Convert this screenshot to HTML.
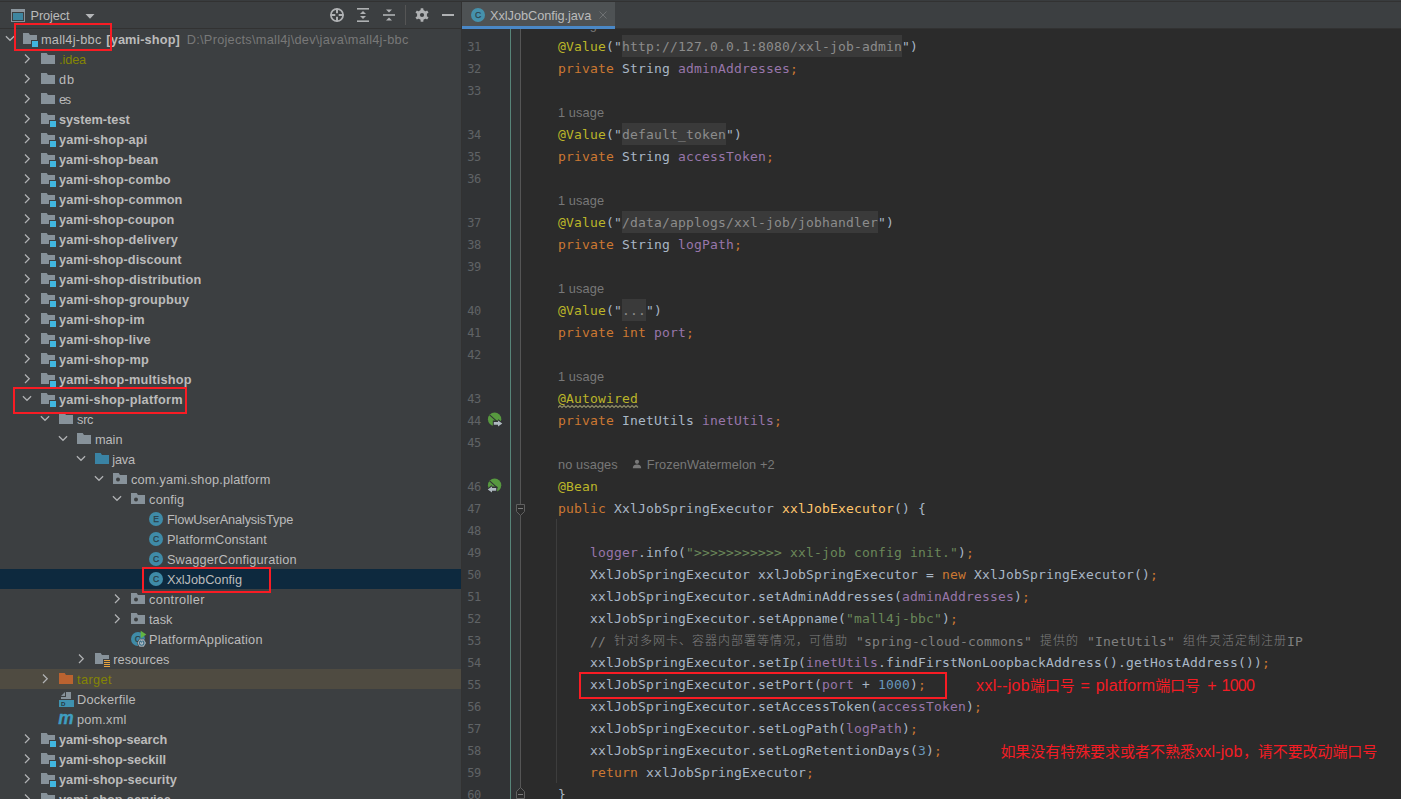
<!DOCTYPE html>
<html lang="zh"><head><meta charset="utf-8"><title>XxlJobConfig.java</title>
<style>
*{box-sizing:border-box;margin:0;padding:0}
html,body{width:1401px;height:799px;overflow:hidden;background:#2b2b2b}
body{position:relative;font-family:"Liberation Sans","Noto Sans CJK SC",sans-serif;font-size:12.75px;color:#bbbbbb}
#app{position:absolute;left:0;top:0;width:1401px;height:799px;overflow:hidden;background:#2b2b2b}
/* top strip */
#topline{position:absolute;left:0;top:0;width:1401px;height:2px;background:#323232;border-top:1px solid #393c3e;z-index:30}
/* left panel */
#left{position:absolute;left:0;top:0;width:461px;height:799px;background:#3c3f41;overflow:hidden}
#lhead{position:absolute;left:0;top:2px;width:461px;height:26px;background:#3c3f41}
#lheadline{position:absolute;left:0;top:28px;width:461px;height:1px;background:#323232}
#vsplit{position:absolute;left:461px;top:2px;width:1px;height:797px;background:#323232;z-index:5}
.row{position:absolute;left:0;width:461px;height:20px}
.row.sel{background:#0d293e}
.row.exc{background:#4f4b41}
.row .ar,.row .ic{position:absolute;top:2px;overflow:visible}
.t{position:absolute;top:1px;line-height:20px;white-space:pre;color:#bbbbbb}
.t.b{font-weight:bold}
.t.g{color:#787878}
.t.o{color:#848504}
/* editor */
#tabbar{position:absolute;left:462px;top:2px;width:939px;height:26px;background:#3c3f41}
#tabline{position:absolute;left:462px;top:28px;width:939px;height:1px;background:#323232}
#tab{position:absolute;left:462px;top:2px;width:153px;height:27px;background:#4e5254;border-bottom:3px solid #4a88c7;z-index:6}
#editor{position:absolute;left:462px;top:29px;width:939px;height:770px;background:#2b2b2b;overflow:hidden}
#gutter{position:absolute;left:0;top:0;width:58px;height:770px;background:#313335}
#gline{position:absolute;left:58px;top:0;width:1px;height:770px;background:#555555}
#vcs{position:absolute;left:48px;top:0;width:1px;height:770px;background:#578579}
#lines{position:absolute;left:-462px;top:-29px;width:1401px;height:799px}
.ln{position:absolute;margin-top:1px;left:467.3px;width:20px;text-align:left;height:22px;line-height:22px;font-family:"DejaVu Sans Mono","Liberation Mono",monospace;font-size:12px;color:#606366;letter-spacing:-0.4px}
.cl{position:absolute;left:526px;height:22px;line-height:24px;white-space:pre;font-family:"DejaVu Sans Mono","Liberation Mono","Noto Sans CJK SC",monospace;font-size:13px;letter-spacing:0.1733px;color:#a9b7c6}
.hint{position:absolute;margin-top:1px;left:558px;height:22px;line-height:22px;white-space:pre;color:#787878;font-size:12.75px;letter-spacing:0.1px}
.k{color:#cc7832}.a{color:#bbb529}.s{color:#6a8759}.f{color:#9876aa}.n{color:#6897bb}.m{color:#ffc66d}.c{color:#808080}
.fd{color:#8c8c8c;background:#3a3a3a;display:inline-block;height:22px;line-height:24px;vertical-align:baseline}
.z{letter-spacing:1px;font-family:"Noto Sans CJK SC",sans-serif;font-size:12px;font-weight:300;position:relative;top:-1px}
.gi{position:absolute}
#guide{position:absolute;left:556px;top:519px;width:1px;height:264px;background:#3d3d3d}
.au{margin-left:14px}
.usr{margin-right:5px;position:relative;top:0px}
.red{position:absolute;border:2px solid #f81c24;z-index:20}
.rt{position:absolute;color:#f31c24;white-space:pre;font-family:"Liberation Sans","Noto Sans CJK SC",sans-serif;z-index:20;height:22px;line-height:22px}
.rl{font-size:16px}
.rz{font-size:15px}

</style></head>
<body>
<div id="app">
<div id="left">
<div id="lhead">
<svg style="position:absolute;left:10px;top:6px" width="16" height="16" viewBox="0 0 16 16"><rect x="1.5" y="1.5" width="13" height="12" fill="none" stroke="#87929A" stroke-width="1"/><rect x="1" y="1" width="14" height="3" fill="#8C979F"/><rect x="3" y="5" width="10" height="7" fill="#3E86A0"/></svg>
<span class="t" style="left:30.5px;top:4px;letter-spacing:-0.1px">Project</span>
<svg style="position:absolute;left:85px;top:12px" width="10" height="6" viewBox="0 0 10 6"><path d="M0.5 0H9.5L5 4.8Z" fill="#B4B6B8"/></svg>
<!-- toolbar icons -->
<svg style="position:absolute;left:329px;top:5px" width="16" height="16" viewBox="0 0 16 16" fill="none" stroke="#AFB1B3"><circle cx="8" cy="8" r="6.1" stroke-width="1.7"/><path d="M8 1.5V6.3M8 9.7V14.5M1.5 8H6.3M9.7 8H14.5" stroke-width="2"/></svg>
<svg style="position:absolute;left:355px;top:5px" width="16" height="16" viewBox="0 0 16 16" fill="#AFB1B3"><rect x="2" y="1" width="12" height="1.6"/><rect x="2" y="13.4" width="12" height="1.6"/><path d="M8 4L11 7H5Z"/><path d="M8 12L11 9H5Z"/></svg>
<svg style="position:absolute;left:381px;top:5px" width="16" height="16" viewBox="0 0 16 16" fill="#AFB1B3"><rect x="2" y="7.2" width="12" height="1.6"/><path d="M8 5.5L11 2.5H5Z"/><path d="M8 10.5L11 13.5H5Z"/></svg>
<div style="position:absolute;left:405px;top:3px;width:1px;height:20px;background:#555555"></div>
<svg style="position:absolute;left:414px;top:5px" width="16" height="16" viewBox="0 0 16 16"><g fill="#AFB1B3"><circle cx="8" cy="8" r="5"/><g><rect x="6.6" y="1.2" width="2.8" height="13.6" rx="0.6"/><rect x="6.6" y="1.2" width="2.8" height="13.6" rx="0.6" transform="rotate(60 8 8)"/><rect x="6.6" y="1.2" width="2.8" height="13.6" rx="0.6" transform="rotate(120 8 8)"/></g></g><circle cx="8" cy="8" r="2.1" fill="#3c3f41"/></svg>
<div style="position:absolute;left:442px;top:12px;width:12px;height:2px;background:#AFB1B3"></div>
</div>
<div id="lheadline"></div>
<div class="row " style="top:29px"><svg class="ar" style="left:1.7px" width="16" height="16" viewBox="0 0 16 16"><path d="M3.9 5.2L8 9.3L12.1 5.2" fill="none" stroke="#B0B2B4" stroke-width="1.25"/></svg><svg class="ic" style="left:22px" width="16" height="16" viewBox="0 0 16 16" ><path fill="#87929A" d="M15 9H9V13H1V2H6.7L7.98 4H15Z"/><rect x="10" y="10" width="6" height="6" fill="#40B6E0"/></svg><span class="t " style="left:41.0px;letter-spacing:0.244px">mall4j-bbc</span><span class="t b" style="left:106.3px;letter-spacing:0.125px">[yami-shop]</span><span class="t g" style="left:186.8px;letter-spacing:0.260px">D:\Projects\mall4j\dev\java\mall4j-bbc</span></div>
<div class="row " style="top:49px"><svg class="ar" style="left:19.3px" width="16" height="16" viewBox="0 0 16 16"><path d="M6 3.5L10.25 7.75L6 12" fill="none" stroke="#B0B2B4" stroke-width="1.25"/></svg><svg class="ic" style="left:40px" width="16" height="16" viewBox="0 0 16 16" ><path fill="#87929A" d="M1 13H15V4H7.98L6.7 2H1Z"/></svg><span class="t o" style="left:59.0px;letter-spacing:-0.112px">.idea</span></div>
<div class="row " style="top:69px"><svg class="ar" style="left:19.3px" width="16" height="16" viewBox="0 0 16 16"><path d="M6 3.5L10.25 7.75L6 12" fill="none" stroke="#B0B2B4" stroke-width="1.25"/></svg><svg class="ic" style="left:40px" width="16" height="16" viewBox="0 0 16 16" ><path fill="#87929A" d="M1 13H15V4H7.98L6.7 2H1Z"/></svg><span class="t " style="left:59.0px;letter-spacing:0.918px">db</span></div>
<div class="row " style="top:89px"><svg class="ar" style="left:19.3px" width="16" height="16" viewBox="0 0 16 16"><path d="M6 3.5L10.25 7.75L6 12" fill="none" stroke="#B0B2B4" stroke-width="1.25"/></svg><svg class="ic" style="left:40px" width="16" height="16" viewBox="0 0 16 16" ><path fill="#87929A" d="M1 13H15V4H7.98L6.7 2H1Z"/></svg><span class="t " style="left:59.0px;letter-spacing:-1.366px">es</span></div>
<div class="row " style="top:109px"><svg class="ar" style="left:19.3px" width="16" height="16" viewBox="0 0 16 16"><path d="M6 3.5L10.25 7.75L6 12" fill="none" stroke="#B0B2B4" stroke-width="1.25"/></svg><svg class="ic" style="left:40px" width="16" height="16" viewBox="0 0 16 16" ><path fill="#87929A" d="M15 9H9V13H1V2H6.7L7.98 4H15Z"/><rect x="10" y="10" width="6" height="6" fill="#40B6E0"/></svg><span class="t b" style="left:58.9px;letter-spacing:0.003px">system-test</span></div>
<div class="row " style="top:129px"><svg class="ar" style="left:19.3px" width="16" height="16" viewBox="0 0 16 16"><path d="M6 3.5L10.25 7.75L6 12" fill="none" stroke="#B0B2B4" stroke-width="1.25"/></svg><svg class="ic" style="left:40px" width="16" height="16" viewBox="0 0 16 16" ><path fill="#87929A" d="M15 9H9V13H1V2H6.7L7.98 4H15Z"/><rect x="10" y="10" width="6" height="6" fill="#40B6E0"/></svg><span class="t b" style="left:58.9px;letter-spacing:0.164px">yami-shop-api</span></div>
<div class="row " style="top:149px"><svg class="ar" style="left:19.3px" width="16" height="16" viewBox="0 0 16 16"><path d="M6 3.5L10.25 7.75L6 12" fill="none" stroke="#B0B2B4" stroke-width="1.25"/></svg><svg class="ic" style="left:40px" width="16" height="16" viewBox="0 0 16 16" ><path fill="#87929A" d="M15 9H9V13H1V2H6.7L7.98 4H15Z"/><rect x="10" y="10" width="6" height="6" fill="#40B6E0"/></svg><span class="t b" style="left:58.9px;letter-spacing:0.126px">yami-shop-bean</span></div>
<div class="row " style="top:169px"><svg class="ar" style="left:19.3px" width="16" height="16" viewBox="0 0 16 16"><path d="M6 3.5L10.25 7.75L6 12" fill="none" stroke="#B0B2B4" stroke-width="1.25"/></svg><svg class="ic" style="left:40px" width="16" height="16" viewBox="0 0 16 16" ><path fill="#87929A" d="M15 9H9V13H1V2H6.7L7.98 4H15Z"/><rect x="10" y="10" width="6" height="6" fill="#40B6E0"/></svg><span class="t b" style="left:58.9px;letter-spacing:0.136px">yami-shop-combo</span></div>
<div class="row " style="top:189px"><svg class="ar" style="left:19.3px" width="16" height="16" viewBox="0 0 16 16"><path d="M6 3.5L10.25 7.75L6 12" fill="none" stroke="#B0B2B4" stroke-width="1.25"/></svg><svg class="ic" style="left:40px" width="16" height="16" viewBox="0 0 16 16" ><path fill="#87929A" d="M15 9H9V13H1V2H6.7L7.98 4H15Z"/><rect x="10" y="10" width="6" height="6" fill="#40B6E0"/></svg><span class="t b" style="left:58.9px;letter-spacing:0.158px">yami-shop-common</span></div>
<div class="row " style="top:209px"><svg class="ar" style="left:19.3px" width="16" height="16" viewBox="0 0 16 16"><path d="M6 3.5L10.25 7.75L6 12" fill="none" stroke="#B0B2B4" stroke-width="1.25"/></svg><svg class="ic" style="left:40px" width="16" height="16" viewBox="0 0 16 16" ><path fill="#87929A" d="M15 9H9V13H1V2H6.7L7.98 4H15Z"/><rect x="10" y="10" width="6" height="6" fill="#40B6E0"/></svg><span class="t b" style="left:58.9px;letter-spacing:0.097px">yami-shop-coupon</span></div>
<div class="row " style="top:229px"><svg class="ar" style="left:19.3px" width="16" height="16" viewBox="0 0 16 16"><path d="M6 3.5L10.25 7.75L6 12" fill="none" stroke="#B0B2B4" stroke-width="1.25"/></svg><svg class="ic" style="left:40px" width="16" height="16" viewBox="0 0 16 16" ><path fill="#87929A" d="M15 9H9V13H1V2H6.7L7.98 4H15Z"/><rect x="10" y="10" width="6" height="6" fill="#40B6E0"/></svg><span class="t b" style="left:58.9px;letter-spacing:0.164px">yami-shop-delivery</span></div>
<div class="row " style="top:249px"><svg class="ar" style="left:19.3px" width="16" height="16" viewBox="0 0 16 16"><path d="M6 3.5L10.25 7.75L6 12" fill="none" stroke="#B0B2B4" stroke-width="1.25"/></svg><svg class="ic" style="left:40px" width="16" height="16" viewBox="0 0 16 16" ><path fill="#87929A" d="M15 9H9V13H1V2H6.7L7.98 4H15Z"/><rect x="10" y="10" width="6" height="6" fill="#40B6E0"/></svg><span class="t b" style="left:58.9px;letter-spacing:0.092px">yami-shop-discount</span></div>
<div class="row " style="top:269px"><svg class="ar" style="left:19.3px" width="16" height="16" viewBox="0 0 16 16"><path d="M6 3.5L10.25 7.75L6 12" fill="none" stroke="#B0B2B4" stroke-width="1.25"/></svg><svg class="ic" style="left:40px" width="16" height="16" viewBox="0 0 16 16" ><path fill="#87929A" d="M15 9H9V13H1V2H6.7L7.98 4H15Z"/><rect x="10" y="10" width="6" height="6" fill="#40B6E0"/></svg><span class="t b" style="left:58.9px;letter-spacing:0.199px">yami-shop-distribution</span></div>
<div class="row " style="top:289px"><svg class="ar" style="left:19.3px" width="16" height="16" viewBox="0 0 16 16"><path d="M6 3.5L10.25 7.75L6 12" fill="none" stroke="#B0B2B4" stroke-width="1.25"/></svg><svg class="ic" style="left:40px" width="16" height="16" viewBox="0 0 16 16" ><path fill="#87929A" d="M15 9H9V13H1V2H6.7L7.98 4H15Z"/><rect x="10" y="10" width="6" height="6" fill="#40B6E0"/></svg><span class="t b" style="left:58.9px;letter-spacing:0.201px">yami-shop-groupbuy</span></div>
<div class="row " style="top:309px"><svg class="ar" style="left:19.3px" width="16" height="16" viewBox="0 0 16 16"><path d="M6 3.5L10.25 7.75L6 12" fill="none" stroke="#B0B2B4" stroke-width="1.25"/></svg><svg class="ic" style="left:40px" width="16" height="16" viewBox="0 0 16 16" ><path fill="#87929A" d="M15 9H9V13H1V2H6.7L7.98 4H15Z"/><rect x="10" y="10" width="6" height="6" fill="#40B6E0"/></svg><span class="t b" style="left:58.9px;letter-spacing:0.256px">yami-shop-im</span></div>
<div class="row " style="top:329px"><svg class="ar" style="left:19.3px" width="16" height="16" viewBox="0 0 16 16"><path d="M6 3.5L10.25 7.75L6 12" fill="none" stroke="#B0B2B4" stroke-width="1.25"/></svg><svg class="ic" style="left:40px" width="16" height="16" viewBox="0 0 16 16" ><path fill="#87929A" d="M15 9H9V13H1V2H6.7L7.98 4H15Z"/><rect x="10" y="10" width="6" height="6" fill="#40B6E0"/></svg><span class="t b" style="left:58.9px;letter-spacing:0.187px">yami-shop-live</span></div>
<div class="row " style="top:349px"><svg class="ar" style="left:19.3px" width="16" height="16" viewBox="0 0 16 16"><path d="M6 3.5L10.25 7.75L6 12" fill="none" stroke="#B0B2B4" stroke-width="1.25"/></svg><svg class="ic" style="left:40px" width="16" height="16" viewBox="0 0 16 16" ><path fill="#87929A" d="M15 9H9V13H1V2H6.7L7.98 4H15Z"/><rect x="10" y="10" width="6" height="6" fill="#40B6E0"/></svg><span class="t b" style="left:58.9px;letter-spacing:0.252px">yami-shop-mp</span></div>
<div class="row " style="top:369px"><svg class="ar" style="left:19.3px" width="16" height="16" viewBox="0 0 16 16"><path d="M6 3.5L10.25 7.75L6 12" fill="none" stroke="#B0B2B4" stroke-width="1.25"/></svg><svg class="ic" style="left:40px" width="16" height="16" viewBox="0 0 16 16" ><path fill="#87929A" d="M15 9H9V13H1V2H6.7L7.98 4H15Z"/><rect x="10" y="10" width="6" height="6" fill="#40B6E0"/></svg><span class="t b" style="left:58.9px;letter-spacing:0.210px">yami-shop-multishop</span></div>
<div class="row " style="top:389px"><svg class="ar" style="left:19.3px" width="16" height="16" viewBox="0 0 16 16"><path d="M3.9 5.2L8 9.3L12.1 5.2" fill="none" stroke="#B0B2B4" stroke-width="1.25"/></svg><svg class="ic" style="left:40px" width="16" height="16" viewBox="0 0 16 16" ><path fill="#87929A" d="M15 9H9V13H1V2H6.7L7.98 4H15Z"/><rect x="10" y="10" width="6" height="6" fill="#40B6E0"/></svg><span class="t b" style="left:58.9px;letter-spacing:0.276px">yami-shop-platform</span></div>
<div class="row " style="top:409px"><svg class="ar" style="left:37.3px" width="16" height="16" viewBox="0 0 16 16"><path d="M3.9 5.2L8 9.3L12.1 5.2" fill="none" stroke="#B0B2B4" stroke-width="1.25"/></svg><svg class="ic" style="left:58px" width="16" height="16" viewBox="0 0 16 16" ><path fill="#87929A" d="M1 13H15V4H7.98L6.7 2H1Z"/></svg><span class="t " style="left:77.0px;letter-spacing:-0.248px">src</span></div>
<div class="row " style="top:429px"><svg class="ar" style="left:55.3px" width="16" height="16" viewBox="0 0 16 16"><path d="M3.9 5.2L8 9.3L12.1 5.2" fill="none" stroke="#B0B2B4" stroke-width="1.25"/></svg><svg class="ic" style="left:76px" width="16" height="16" viewBox="0 0 16 16" ><path fill="#87929A" d="M1 13H15V4H7.98L6.7 2H1Z"/></svg><span class="t " style="left:95.0px;letter-spacing:-0.045px">main</span></div>
<div class="row " style="top:449px"><svg class="ar" style="left:73.3px" width="16" height="16" viewBox="0 0 16 16"><path d="M3.9 5.2L8 9.3L12.1 5.2" fill="none" stroke="#B0B2B4" stroke-width="1.25"/></svg><svg class="ic" style="left:94px" width="16" height="16" viewBox="0 0 16 16" ><path fill="#3A83A4" d="M1 13H15V4H7.98L6.7 2H1Z"/></svg><span class="t " style="left:112.3px;letter-spacing:-0.197px">java</span></div>
<div class="row " style="top:469px"><svg class="ar" style="left:91.3px" width="16" height="16" viewBox="0 0 16 16"><path d="M3.9 5.2L8 9.3L12.1 5.2" fill="none" stroke="#B0B2B4" stroke-width="1.25"/></svg><svg class="ic" style="left:112px" width="16" height="16" viewBox="0 0 16 16" ><path fill="#87929A" d="M1 13H15V4H7.98L6.7 2H1Z"/><circle cx="6" cy="8.5" r="2" fill="#3c3f41"/></svg><span class="t " style="left:131.0px;letter-spacing:0.189px">com.yami.shop.platform</span></div>
<div class="row " style="top:489px"><svg class="ar" style="left:109.3px" width="16" height="16" viewBox="0 0 16 16"><path d="M3.9 5.2L8 9.3L12.1 5.2" fill="none" stroke="#B0B2B4" stroke-width="1.25"/></svg><svg class="ic" style="left:130px" width="16" height="16" viewBox="0 0 16 16" ><path fill="#87929A" d="M1 13H15V4H7.98L6.7 2H1Z"/><circle cx="6" cy="8.5" r="2" fill="#3c3f41"/></svg><span class="t " style="left:149.1px;letter-spacing:0.195px">config</span></div>
<div class="row " style="top:509px"><svg class="ic" style="left:148px" width="16" height="16" viewBox="0 0 16 16" ><circle cx="8" cy="8" r="7" fill="#3F8BA8"/><text x="8" y="11" text-anchor="middle" font-family="Liberation Sans, sans-serif" font-size="8.6" fill="#2B3E46" stroke="#2B3E46" stroke-width="0.25">E</text></svg><span class="t " style="left:166.9px;letter-spacing:-0.135px">FlowUserAnalysisType</span></div>
<div class="row " style="top:529px"><svg class="ic" style="left:148px" width="16" height="16" viewBox="0 0 16 16" ><circle cx="8" cy="8" r="7" fill="#3F8BA8"/><text x="8" y="11" text-anchor="middle" font-family="Liberation Sans, sans-serif" font-size="8.6" fill="#2B3E46" stroke="#2B3E46" stroke-width="0.25">C</text></svg><span class="t " style="left:166.9px;letter-spacing:0.093px">PlatformConstant</span></div>
<div class="row " style="top:549px"><svg class="ic" style="left:148px" width="16" height="16" viewBox="0 0 16 16" ><circle cx="8" cy="8" r="7" fill="#3F8BA8"/><text x="8" y="11" text-anchor="middle" font-family="Liberation Sans, sans-serif" font-size="8.6" fill="#2B3E46" stroke="#2B3E46" stroke-width="0.25">C</text></svg><span class="t " style="left:166.9px;letter-spacing:0.186px">SwaggerConfiguration</span></div>
<div class="row sel" style="top:569px"><svg class="ic" style="left:148px" width="16" height="16" viewBox="0 0 16 16" ><circle cx="8" cy="8" r="7" fill="#3F8BA8"/><text x="8" y="11" text-anchor="middle" font-family="Liberation Sans, sans-serif" font-size="8.6" fill="#2B3E46" stroke="#2B3E46" stroke-width="0.25">C</text></svg><span class="t " style="left:166.9px;letter-spacing:-0.002px">XxlJobConfig</span></div>
<div class="row " style="top:589px"><svg class="ar" style="left:109.3px" width="16" height="16" viewBox="0 0 16 16"><path d="M6 3.5L10.25 7.75L6 12" fill="none" stroke="#B0B2B4" stroke-width="1.25"/></svg><svg class="ic" style="left:130px" width="16" height="16" viewBox="0 0 16 16" ><path fill="#87929A" d="M1 13H15V4H7.98L6.7 2H1Z"/><circle cx="6" cy="8.5" r="2" fill="#3c3f41"/></svg><span class="t " style="left:149.1px;letter-spacing:0.318px">controller</span></div>
<div class="row " style="top:609px"><svg class="ar" style="left:109.3px" width="16" height="16" viewBox="0 0 16 16"><path d="M6 3.5L10.25 7.75L6 12" fill="none" stroke="#B0B2B4" stroke-width="1.25"/></svg><svg class="ic" style="left:130px" width="16" height="16" viewBox="0 0 16 16" ><path fill="#87929A" d="M1 13H15V4H7.98L6.7 2H1Z"/><circle cx="6" cy="8.5" r="2" fill="#3c3f41"/></svg><span class="t " style="left:149.1px;letter-spacing:-0.028px">task</span></div>
<div class="row " style="top:629px"><svg class="ic" style="left:130px" width="16" height="16" viewBox="0 0 16 16" ><circle cx="8" cy="8" r="7" fill="#3F8BA8"/><text x="7.8" y="11" text-anchor="middle" font-family="Liberation Sans, sans-serif" font-size="8.6" fill="#2B3E46" stroke="#2B3E46" stroke-width="0.25">C</text><path d="M10.7 -0.2L16.3 3.5L10.7 7.2Z" fill="#62B543"/><path d="M16.6 12L14.15 16.2H9.25L6.8 12L9.25 7.8H14.15Z" fill="#3c3f41"/><path d="M16 12L13.85 15.7H9.55L7.4 12L9.55 8.3H13.85Z" fill="#A3AEB6"/><circle cx="11.7" cy="12.1" r="2.2" fill="#B9C2C9" stroke="#3A6E88" stroke-width="1.1"/><path d="M11.7 9V11" stroke="#A3AEB6" stroke-width="1.4"/><path d="M11.7 10V12.3" stroke="#3A6E88" stroke-width="0.9"/></svg><span class="t " style="left:149.1px;letter-spacing:0.198px">PlatformApplication</span></div>
<div class="row " style="top:649px"><svg class="ar" style="left:73.3px" width="16" height="16" viewBox="0 0 16 16"><path d="M6 3.5L10.25 7.75L6 12" fill="none" stroke="#B0B2B4" stroke-width="1.25"/></svg><svg class="ic" style="left:94px" width="16" height="16" viewBox="0 0 16 16" ><path fill="#87929A" d="M15 8H9V13H1V2H6.7L7.98 4H15Z"/><g fill="#E5A440"><rect x="10" y="9" width="6" height="1"/><rect x="10" y="11" width="6" height="1"/><rect x="10" y="13" width="6" height="1"/><rect x="10" y="15" width="6" height="1"/></g></svg><span class="t " style="left:113.3px;letter-spacing:0.015px">resources</span></div>
<div class="row exc" style="top:669px"><svg class="ar" style="left:37.3px" width="16" height="16" viewBox="0 0 16 16"><path d="M6 3.5L10.25 7.75L6 12" fill="none" stroke="#B0B2B4" stroke-width="1.25"/></svg><svg class="ic" style="left:58px" width="16" height="16" viewBox="0 0 16 16" ><path fill="#BA6330" d="M1 13H15V4H7.98L6.7 2H1Z"/></svg><span class="t o" style="left:77.0px;letter-spacing:0.379px">target</span></div>
<div class="row " style="top:689px"><svg class="ic" style="left:58px" width="16" height="16" viewBox="0 0 16 16" ><path d="M7 1L3 5H7Z" fill="#9AA7B0" opacity=".8"/><path d="M8 1V6H3V8H13V1Z" fill="#9AA7B0" opacity=".8"/><rect x="1" y="9" width="15" height="7" fill="#3F92B0"/><text x="3" y="14.8" font-family="Liberation Sans, sans-serif" font-size="6.2" font-weight="bold" fill="#263840">D</text></svg><span class="t " style="left:77.0px;letter-spacing:0.213px">Dockerfile</span></div>
<div class="row " style="top:709px"><svg class="ic" style="left:58px" width="16" height="16" viewBox="0 0 16 16" ><text x="0.2" y="13" textLength="15.4" lengthAdjust="spacingAndGlyphs" font-family="Liberation Sans, sans-serif" font-size="19" font-weight="bold" font-style="italic" fill="#3F9EC0" stroke="#3F9EC0" stroke-width="0.4">m</text></svg><span class="t " style="left:77.0px;letter-spacing:0.188px">pom.xml</span></div>
<div class="row " style="top:729px"><svg class="ar" style="left:19.3px" width="16" height="16" viewBox="0 0 16 16"><path d="M6 3.5L10.25 7.75L6 12" fill="none" stroke="#B0B2B4" stroke-width="1.25"/></svg><svg class="ic" style="left:40px" width="16" height="16" viewBox="0 0 16 16" ><path fill="#87929A" d="M15 9H9V13H1V2H6.7L7.98 4H15Z"/><rect x="10" y="10" width="6" height="6" fill="#40B6E0"/></svg><span class="t b" style="left:58.9px;letter-spacing:-0.048px">yami-shop-search</span></div>
<div class="row " style="top:749px"><svg class="ar" style="left:19.3px" width="16" height="16" viewBox="0 0 16 16"><path d="M6 3.5L10.25 7.75L6 12" fill="none" stroke="#B0B2B4" stroke-width="1.25"/></svg><svg class="ic" style="left:40px" width="16" height="16" viewBox="0 0 16 16" ><path fill="#87929A" d="M15 9H9V13H1V2H6.7L7.98 4H15Z"/><rect x="10" y="10" width="6" height="6" fill="#40B6E0"/></svg><span class="t b" style="left:58.9px;letter-spacing:0.006px">yami-shop-seckill</span></div>
<div class="row " style="top:769px"><svg class="ar" style="left:19.3px" width="16" height="16" viewBox="0 0 16 16"><path d="M6 3.5L10.25 7.75L6 12" fill="none" stroke="#B0B2B4" stroke-width="1.25"/></svg><svg class="ic" style="left:40px" width="16" height="16" viewBox="0 0 16 16" ><path fill="#87929A" d="M15 9H9V13H1V2H6.7L7.98 4H15Z"/><rect x="10" y="10" width="6" height="6" fill="#40B6E0"/></svg><span class="t b" style="left:58.9px;letter-spacing:0.058px">yami-shop-security</span></div>
<div class="row " style="top:789px"><svg class="ar" style="left:19.3px" width="16" height="16" viewBox="0 0 16 16"><path d="M6 3.5L10.25 7.75L6 12" fill="none" stroke="#B0B2B4" stroke-width="1.25"/></svg><svg class="ic" style="left:40px" width="16" height="16" viewBox="0 0 16 16" ><path fill="#87929A" d="M15 9H9V13H1V2H6.7L7.98 4H15Z"/><rect x="10" y="10" width="6" height="6" fill="#40B6E0"/></svg><span class="t b" style="left:58.9px;letter-spacing:-0.004px">yami-shop-service</span></div>
<div class="red" style="left:14px;top:23px;width:98px;height:28px"></div>
<div class="red" style="left:13px;top:387px;width:174px;height:27px"></div>
<div class="red" style="left:142px;top:567px;width:129px;height:26px"></div>
</div>
<div id="vsplit"></div>
<div id="tabbar"></div>
<div id="tabline"></div>
<div id="tab">
<svg style="position:absolute;left:8px;top:5px" width="16" height="16" viewBox="0 0 16 16"><circle cx="8" cy="8" r="7" fill="#4591AC"/><text x="8" y="11" text-anchor="middle" font-family="Liberation Sans, sans-serif" font-size="8.6" fill="#2F444D" stroke="#2F444D" stroke-width="0.25">C</text></svg>
<span class="t" style="left:28px;top:4px;letter-spacing:-0.05px">XxlJobConfig.java</span>
<svg style="position:absolute;left:137px;top:9px" width="8" height="8" viewBox="0 0 8 8"><path d="M0.5 0.5L7.5 7.5M7.5 0.5L0.5 7.5" stroke="#6e7173" stroke-width="1"/></svg>
</div>
<div id="editor">
<div id="gutter"></div><div id="vcs"></div><div id="gline"></div>
<div id="lines">
<div class="hint" style="top:13px">1 usage</div>
<div class="ln" style="top:35px">31</div>
<div class="cl" style="top:35px">    <span class="a">@Value</span>("<span class="fd">http://127.0.0.1:8080/xxl-job-admin</span>")</div>
<div class="ln" style="top:57px">32</div>
<div class="cl" style="top:57px">    <span class="k">private</span> String <span class="f">adminAddresses</span><span class="k">;</span></div>
<div class="ln" style="top:79px">33</div>
<div class="cl" style="top:79px"></div>
<div class="hint" style="top:101px">1 usage</div>
<div class="ln" style="top:123px">34</div>
<div class="cl" style="top:123px">    <span class="a">@Value</span>("<span class="fd">default_token</span>")</div>
<div class="ln" style="top:145px">35</div>
<div class="cl" style="top:145px">    <span class="k">private</span> String <span class="f">accessToken</span><span class="k">;</span></div>
<div class="ln" style="top:167px">36</div>
<div class="cl" style="top:167px"></div>
<div class="hint" style="top:189px">1 usage</div>
<div class="ln" style="top:211px">37</div>
<div class="cl" style="top:211px">    <span class="a">@Value</span>("<span class="fd">/data/applogs/xxl-job/jobhandler</span>")</div>
<div class="ln" style="top:233px">38</div>
<div class="cl" style="top:233px">    <span class="k">private</span> String <span class="f">logPath</span><span class="k">;</span></div>
<div class="ln" style="top:255px">39</div>
<div class="cl" style="top:255px"></div>
<div class="hint" style="top:277px">1 usage</div>
<div class="ln" style="top:299px">40</div>
<div class="cl" style="top:299px">    <span class="a">@Value</span>("<span class="fd">...</span>")</div>
<div class="ln" style="top:321px">41</div>
<div class="cl" style="top:321px">    <span class="k">private int </span><span class="f">port</span><span class="k">;</span></div>
<div class="ln" style="top:343px">42</div>
<div class="cl" style="top:343px"></div>
<div class="hint" style="top:365px">1 usage</div>
<div class="ln" style="top:387px">43</div>
<div class="cl" style="top:387px">    <span class="a wavy">@Autowired</span></div>
<div class="ln" style="top:409px">44</div>
<div class="cl" style="top:409px">    <span class="k">private</span> InetUtils <span class="f">inetUtils</span><span class="k">;</span></div>
<div class="ln" style="top:431px">45</div>
<div class="cl" style="top:431px"></div>
<div class="hint" style="top:453px">no usages<span class="au"><svg class="usr" width="10" height="10" viewBox="0 0 10 10"><circle cx="5" cy="2.8" r="2.1" fill="#787878"/><path d="M0.8 9.2C0.8 6.6 2.6 5.6 5 5.6S9.2 6.6 9.2 9.2Z" fill="#787878"/></svg>FrozenWatermelon +2</span></div>
<div class="ln" style="top:475px">46</div>
<div class="cl" style="top:475px">    <span class="a">@Bean</span></div>
<div class="ln" style="top:497px">47</div>
<div class="cl" style="top:497px">    <span class="k">public</span> XxlJobSpringExecutor <span class="m">xxlJobExecutor</span>() {</div>
<div class="ln" style="top:519px">48</div>
<div class="cl" style="top:519px"></div>
<div class="ln" style="top:541px">49</div>
<div class="cl" style="top:541px">        <span class="f">logger</span>.info(<span class="s">"&gt;&gt;&gt;&gt;&gt;&gt;&gt;&gt;&gt;&gt;&gt; xxl-job config init."</span>)<span class="k">;</span></div>
<div class="ln" style="top:563px">50</div>
<div class="cl" style="top:563px">        XxlJobSpringExecutor xxlJobSpringExecutor = <span class="k">new</span> XxlJobSpringExecutor()<span class="k">;</span></div>
<div class="ln" style="top:585px">51</div>
<div class="cl" style="top:585px">        xxlJobSpringExecutor.setAdminAddresses(<span class="f">adminAddresses</span>)<span class="k">;</span></div>
<div class="ln" style="top:607px">52</div>
<div class="cl" style="top:607px">        xxlJobSpringExecutor.setAppname(<span class="s">"mall4j-bbc"</span>)<span class="k">;</span></div>
<div class="ln" style="top:629px">53</div>
<div class="cl" style="top:629px">        <span class="c">// <span class="z">针对多网卡、容器内部署等情况，可借助</span> "spring-cloud-commons" <span class="z">提供的</span> "InetUtils" <span class="z">组件灵活定制注册</span>IP</span></div>
<div class="ln" style="top:651px">54</div>
<div class="cl" style="top:651px">        xxlJobSpringExecutor.setIp(<span class="f">inetUtils</span>.findFirstNonLoopbackAddress().getHostAddress())<span class="k">;</span></div>
<div class="ln" style="top:673px">55</div>
<div class="cl" style="top:673px">        xxlJobSpringExecutor.setPort(<span class="f">port</span> + <span class="n">1000</span>)<span class="k">;</span></div>
<div class="ln" style="top:695px">56</div>
<div class="cl" style="top:695px">        xxlJobSpringExecutor.setAccessToken(<span class="f">accessToken</span>)<span class="k">;</span></div>
<div class="ln" style="top:717px">57</div>
<div class="cl" style="top:717px">        xxlJobSpringExecutor.setLogPath(<span class="f">logPath</span>)<span class="k">;</span></div>
<div class="ln" style="top:739px">58</div>
<div class="cl" style="top:739px">        xxlJobSpringExecutor.setLogRetentionDays(<span class="n">3</span>)<span class="k">;</span></div>
<div class="ln" style="top:761px">59</div>
<div class="cl" style="top:761px">        <span class="k">return</span> xxlJobSpringExecutor<span class="k">;</span></div>
<div class="ln" style="top:783px">60</div>
<div class="cl" style="top:783px">    }</div>
<div id="guide"></div>
<svg class="gi" style="left:558px;top:404px" width="81" height="5" viewBox="0 0 81 5"><path d="M0 3.5L2 1.5L4 3.5L6 1.5L8 3.5L10 1.5L12 3.5L14 1.5L16 3.5L18 1.5L20 3.5L22 1.5L24 3.5L26 1.5L28 3.5L30 1.5L32 3.5L34 1.5L36 3.5L38 1.5L40 3.5L42 1.5L44 3.5L46 1.5L48 3.5L50 1.5L52 3.5L54 1.5L56 3.5L58 1.5L60 3.5L62 1.5L64 3.5L66 1.5L68 3.5L70 1.5L72 3.5L74 1.5L76 3.5L78 1.5L80 3.5" fill="none" stroke="#8F8C66" stroke-width="1.15"/></svg>
<svg class="gi" style="left:487px;top:412px" width="16" height="16" viewBox="0 0 16 16"><circle cx="7.6" cy="7.3" r="6.7" fill="#57993F"/><path d="M2.6 2.8L9.6 9.2" stroke="#313335" stroke-width="1.1"/><path d="M5.8 8.6H11.2V7L16.4 11.4L11.2 15.8V14.2H5.8Z" fill="#313335"/><path d="M6.8 10.1H11V8.4L15.3 11.4L11 14.4V12.7H6.8Z" fill="#AFB9C0"/></svg>
<svg class="gi" style="left:487px;top:478px" width="16" height="16" viewBox="0 0 16 16"><circle cx="7.6" cy="7.3" r="6.7" fill="#57993F"/><path d="M2.6 2.8L10.6 10.2" stroke="#313335" stroke-width="1.1"/><path d="M10.2 8.6H4.8V7L-0.4 11.4L4.8 15.8V14.2H10.2Z" fill="#313335"/><path d="M9.2 10.1H5V8.4L0.7 11.4L5 14.4V12.7H9.2Z" fill="#AFB9C0"/></svg>
<svg class="gi" style="left:515px;top:503px" width="11" height="14" viewBox="0 0 11 14"><path d="M1.5 1.5H9.5V8.5L5.5 12.5L1.5 8.5Z" fill="#2b2b2b" stroke="#606060" stroke-width="1"/><rect x="3" y="5" width="5" height="1" fill="#7c7c7c"/></svg>
<svg class="gi" style="left:515px;top:786px" width="11" height="14" viewBox="0 0 11 14"><path d="M5.5 1.5L9.5 5.5V12.5H1.5V5.5Z" fill="#2b2b2b" stroke="#606060" stroke-width="1"/><rect x="3" y="8" width="5" height="1" fill="#7c7c7c"/></svg>
<div class="red" style="left:579px;top:672px;width:368px;height:27px"></div>
<span class="rt rl" style="left:976.1px;top:675px;letter-spacing:0.291px">xxl--job</span><span class="rt rz" style="left:1030.0px;top:675px;letter-spacing:-0.067px">端口号</span><span class="rt rl" style="left:1080.5px;top:675px;letter-spacing:0.000px">=</span><span class="rt rl" style="left:1095.7px;top:675px;letter-spacing:0.243px">platform</span><span class="rt rz" style="left:1155.2px;top:675px;letter-spacing:-0.067px">端口号</span><span class="rt rl" style="left:1207.3px;top:675px;letter-spacing:0.000px">+</span><span class="rt rl" style="left:1221.6px;top:675px;letter-spacing:-0.765px">1000</span>
<span class="rt rz" style="left:1000.4px;top:741px;letter-spacing:-0.046px">如果没有特殊要求或者不熟悉</span><span class="rt rl" style="left:1195.2px;top:741px;letter-spacing:0.144px">xxl-job</span><span class="rt rz" style="left:1243.0px;top:741px;letter-spacing:-0.000px">，</span><span class="rt rz" style="left:1257.8px;top:741px;letter-spacing:-0.075px">请不要改动端口号</span>
</div>
</div>
<div id="topline"></div>
</div>

</body></html>
